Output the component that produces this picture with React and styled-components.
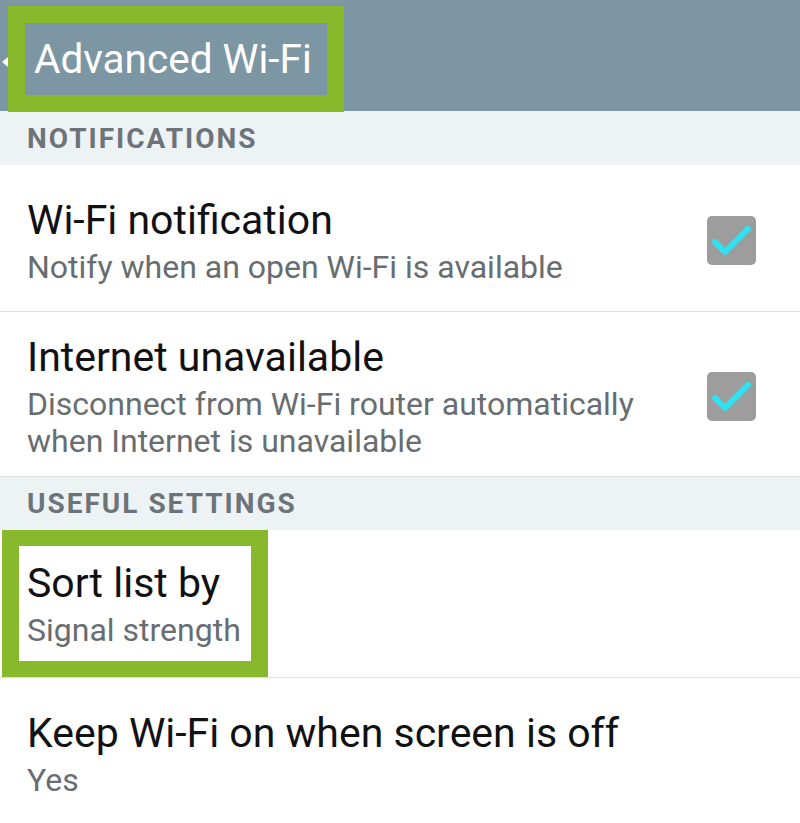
import React from "react";
import styled, { createGlobalStyle } from "styled-components";

const GlobalStyle = createGlobalStyle`
  body {
    margin: 0;
    background: #fff;
    font-family: Roboto, "Noto Sans", "Liberation Sans", sans-serif;
  }
`;

const Screen = styled.div`
  width: 800px;
  background: #fff;
  overflow: hidden;
`;

const Header = styled.div`
  height: 112px;
  box-sizing: border-box;
  padding: 6px 0 0 2px;
  display: flex;
  align-items: flex-start;
  background: linear-gradient(to bottom, #7c96a3 0, #7c96a3 111px, #edf2f5 111px);
`;

const Back = styled.svg`
  width: 6px;
  height: 10px;
  margin-top: 51px;
`;

const Highlight = styled.div`
  border: 17px solid #88b82b;
  border-top-width: ${(p) => p.$vertical || 17}px;
  border-bottom-width: ${(p) => p.$vertical || 17}px;
  box-sizing: border-box;
  display: flex;
  flex-direction: column;
  justify-content: center;
  padding: ${(p) => p.$pad};
  background: ${(p) => p.$bg};
`;

const Title = styled.h1`
  margin: 0;
  font-size: 40.5px;
  font-weight: 400;
  line-height: 72px;
  color: #fff;
`;

const Section = styled.div`
  height: 53px;
  box-sizing: border-box;
  padding-left: 27px;
  display: flex;
  align-items: center;
  background: #edf2f5;
  color: #6d7479;
  font-size: 28px;
  font-weight: 700;
  letter-spacing: 2px;
`;

const Row = styled.div`
  min-height: ${(p) => p.$height || 147}px;
  box-sizing: border-box;
  padding: ${(p) => (p.$flush ? "0 0 0 2px" : "20px 44px 16px 27px")};
  border-bottom: 1px solid #dedede;
  display: flex;
  align-items: ${(p) => (p.$flush ? "stretch" : "center")};
  gap: 24px;
`;

const Text = styled.div`
  flex: 1;
  display: flex;
  flex-direction: column;
`;

const Label = styled.div`
  font-size: 41px;
  line-height: 50px;
  color: #111;
`;

const Summary = styled.div`
  margin-top: 4px;
  font-size: 32px;
  line-height: 37px;
  color: #686d70;
`;

const Box = styled.div`
  width: 49px;
  height: 49px;
  flex: none;
  border-radius: 5px;
  background: #9d9d9d;
  display: flex;
  align-items: center;
  justify-content: center;
`;

const CheckBox = () => (
  <Box>
    <svg width="49" height="49" viewBox="0 0 49 49">
      <path
        d="M8 26 L18 36 L41 13"
        fill="none"
        stroke="#2fe2f2"
        strokeWidth="6"
        strokeLinecap="round"
        strokeLinejoin="round"
      />
    </svg>
  </Box>
);

const Setting = ({ label, summary, checked }) => (
  <Row>
    <Text>
      <Label>{label}</Label>
      <Summary>{summary}</Summary>
    </Text>
    {checked && <CheckBox />}
  </Row>
);

export default function App() {
  return (
    <Screen>
      <GlobalStyle />
      <Header>
        <Back viewBox="0 0 6 10">
          <path d="M0 5 L6 0 L6 10 Z" fill="#fff" />
        </Back>
        <Highlight $pad="0 15px 0 9px" $bg="#7c96a3">
          <Title>Advanced Wi-Fi</Title>
        </Highlight>
      </Header>

      <Section>NOTIFICATIONS</Section>
      <Setting
        label="Wi-Fi notification"
        summary="Notify when an open Wi-Fi is available"
        checked
      />
      <Setting
        label="Internet unavailable"
        summary={
          <>
            Disconnect from Wi-Fi router automatically
            <br />
            when Internet is unavailable
          </>
        }
        checked
      />

      <Section>USEFUL SETTINGS</Section>
      <Row $flush $height={148}>
        <Highlight $vertical={16} $pad="0 10px 0 8px" $bg="#fff">
          <Label>Sort list by</Label>
          <Summary>Signal strength</Summary>
        </Highlight>
      </Row>
      <Setting label="Keep Wi-Fi on when screen is off" summary="Yes" />
    </Screen>
  );
}
